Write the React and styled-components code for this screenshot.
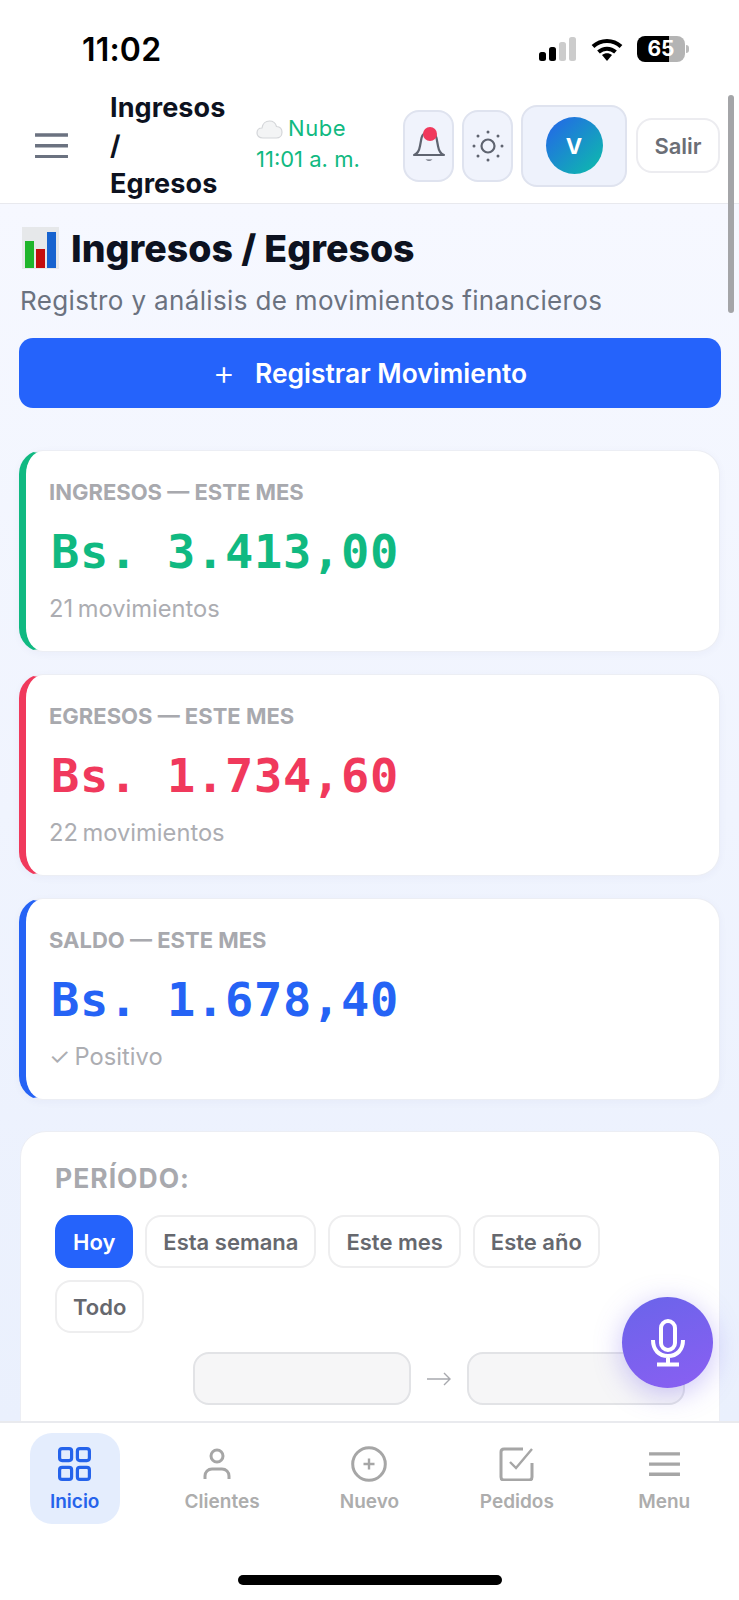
import styled, { createGlobalStyle } from "styled-components";

const GlobalStyle = createGlobalStyle`
  html, body { margin: 0; padding: 0; background: #fff; }
  * { box-sizing: border-box; }
  body { font-family: Inter, "Liberation Sans", sans-serif; }
`;

const stats = [
  { label: "INGRESOS — ESTE MES", amount: "Bs. 3.413,00", note: "21 movimientos", color: "#10b981" },
  { label: "EGRESOS — ESTE MES", amount: "Bs. 1.734,60", note: "22 movimientos", color: "#f0395c" },
  { label: "SALDO — ESTE MES", amount: "Bs. 1.678,40", note: "✓ Positivo", color: "#2563f5" },
];

const periods = ["Hoy", "Esta semana", "Este mes", "Este año", "Todo"];

function SignalIcon() {
  return (
    <svg width="38" height="25" viewBox="0 0 38 25">
      <rect x="0" y="15" width="7" height="9" rx="2.5" fill="#000" />
      <rect x="10" y="10" width="7" height="14" rx="2.5" fill="#000" />
      <rect x="20" y="5" width="7" height="19" rx="2.5" fill="#ccc" />
      <rect x="30" y="0" width="7" height="24" rx="2.5" fill="#ccc" />
    </svg>
  );
}

function WifiIcon() {
  return (
    <svg width="32" height="25" viewBox="0 0 32 25" fill="none" stroke="#000" strokeWidth="4">
      <path d="M2 9.5C10 2 22 2 30 9.5" />
      <path d="M7.5 15C12.5 10.5 19.5 10.5 24.5 15" />
      <path d="M11 18l5 6 5-6c-3-2.4-7-2.4-10 0z" fill="#000" stroke="none" />
    </svg>
  );
}

function MenuIcon({ size = 33, color = "#6b7280", width = 3.4 }) {
  return (
    <svg width={size} height={size * 0.78} viewBox="0 0 32 25" stroke={color} strokeWidth={width}>
      <path d="M0 2h32M0 12.500h32M0 23h32" />
    </svg>
  );
}

function CloudIcon() {
  return (
    <svg width="27" height="20" viewBox="0 0 27 20">
      <path d="M7 19C3 19 1 16.500 1 14c0-3 2-5 5-5 .6-4 3.500-7 7.500-7 3.500 0 6 2 7 5.500 3.300.2 5.500 2.500 5.500 5.700 0 3.300-2.300 5.800-5.500 5.800z" fill="#f3f4f5" stroke="#d4d6d9" strokeWidth="1.200" />
    </svg>
  );
}

function BellIcon() {
  return (
    <svg width="34" height="38" viewBox="0 0 34 38" fill="none">
      <path d="M2 28c3-1 5-3 6-9l1.500-8c.8-4 4-6.500 7.500-6.500s6.700 2.500 7.500 6.500l1.500 8c1 6 3 8 6 9z" stroke="#5f6470" strokeWidth="2.200" strokeLinejoin="round" />
      <path d="M13.500 32.500c2 1.800 5 1.800 7 0z" fill="#5f6470" />
      <circle cx="18" cy="7" r="7" fill="#f0395c" />
    </svg>
  );
}

function SunIcon() {
  const dots = [[17, 3], [17, 31], [3, 17], [31, 17], [7, 7], [27, 7], [7, 27], [27, 27]];
  return (
    <svg width="34" height="34" viewBox="0 0 34 34" fill="#5f6470">
      <circle cx="17" cy="17" r="6.500" fill="none" stroke="#5f6470" strokeWidth="2.200" />
      {dots.map(([x, y]) => <circle key={`${x}-${y}`} cx={x} cy={y} r="1.500" />)}
    </svg>
  );
}

function ChartEmoji() {
  return (
    <svg width="37" height="42" viewBox="0 0 37 42">
      <rect x="0" y="0" width="37" height="42" fill="#e6e8ea" />
      <rect x="3" y="14" width="9" height="27" fill="#1fb52b" />
      <rect x="14" y="22" width="9" height="19" fill="#c40d0d" />
      <rect x="25" y="5" width="9" height="36" fill="#1763cf" />
    </svg>
  );
}

function MicIcon() {
  return (
    <svg width="36" height="48" viewBox="0 0 36 48" fill="none" stroke="#fff" strokeWidth="4">
      <rect x="11" y="2" width="14" height="29" rx="7" />
      <path d="M3 21c0 10 6 16 15 16s15-6 15-16M18 37v8M7 45.500h22" />
    </svg>
  );
}

function ArrowIcon() {
  return (
    <svg width="24" height="14" viewBox="0 0 24 14" fill="none" stroke="#a8a9ae" strokeWidth="1.400">
      <path d="M0 7h23M17 1l6 6-6 6" />
    </svg>
  );
}

function GridIcon() {
  return (
    <svg width="33" height="34" viewBox="0 0 33 34" fill="none" stroke="#2563eb" strokeWidth="3.200">
      <rect x="1.600" y="1.600" width="12" height="12" rx="2.500" />
      <rect x="19.400" y="1.600" width="12" height="12" rx="2.500" />
      <rect x="1.600" y="20.400" width="12" height="12" rx="2.500" />
      <rect x="19.400" y="20.400" width="12" height="12" rx="2.500" />
    </svg>
  );
}

function UserIcon() {
  return (
    <svg width="38" height="32" viewBox="0 0 38 32" fill="none" stroke="#a6a6a6" strokeWidth="3">
      <circle cx="14" cy="8" r="6" />
      <path d="M2 31v-3c0-4 3-7 7-7h10c4 0 7 3 7 7v3" />
    </svg>
  );
}

function PlusCircleIcon() {
  return (
    <svg width="36" height="36" viewBox="0 0 36 36" fill="none" stroke="#a6a6a6" strokeWidth="3">
      <circle cx="18" cy="18" r="16.300" />
      <path d="M18 12.500v11M12.500 18h11" strokeWidth="2.400" />
    </svg>
  );
}

function CheckBoxIcon() {
  return (
    <svg width="35" height="34" viewBox="0 0 35 34" fill="none" stroke="#a6a6a6" strokeWidth="3">
      <path d="M24 2H5C3 2 2 3 2 5v25c0 2 1 3 3 3h25c2 0 3-1 3-3V16" />
      <path d="M11 15l6 6L33 2" strokeWidth="2.400" />
    </svg>
  );
}

const navItems = [
  { label: "Inicio", icon: <GridIcon />, active: true },
  { label: "Clientes", icon: <UserIcon /> },
  { label: "Nuevo", icon: <PlusCircleIcon /> },
  { label: "Pedidos", icon: <CheckBoxIcon /> },
  { label: "Menu", icon: <MenuIcon size={31} color="#a6a6a6" /> },
];

export default function App() {
  return (
    <Phone>
      <GlobalStyle />
      <StatusBar>
        <Clock>11:02</Clock>
        <StatusIcons>
          <SignalIcon />
          <WifiIcon />
          <Battery>65</Battery>
        </StatusIcons>
      </StatusBar>

      <Header>
        <Burger><MenuIcon /></Burger>
        <PageName>Ingresos / Egresos</PageName>
        <SyncInfo>
          <SyncLine $spread><CloudIcon /> Nube</SyncLine>
          <SyncLine>11:01 a. m.</SyncLine>
        </SyncInfo>
        <IconButton><BellIcon /></IconButton>
        <IconButton><SunIcon /></IconButton>
        <AvatarButton><Avatar>V</Avatar></AvatarButton>
        <LogoutButton>Salir</LogoutButton>
      </Header>

      <Main>
        <Title><ChartEmoji /> Ingresos / Egresos</Title>
        <Subtitle>Registro y análisis de movimientos financieros</Subtitle>
        <PrimaryButton><PlusSign>+</PlusSign> Registrar Movimiento</PrimaryButton>

        <Stats>
          {stats.map((item) => (
            <StatCard key={item.label} $color={item.color}>
              <StatLabel>{item.label}</StatLabel>
              <StatAmount $color={item.color}>{item.amount}</StatAmount>
              <StatNote>{item.note}</StatNote>
            </StatCard>
          ))}
        </Stats>

        <PeriodCard>
          <PeriodTitle>PERÍODO:</PeriodTitle>
          <Chips>
            {periods.map((item, index) => (
              <Chip key={item} $active={index === 0}>{item}</Chip>
            ))}
          </Chips>
          <DateRow>
            <DateInput />
            <ArrowIcon />
            <DateInput />
          </DateRow>
        </PeriodCard>
      </Main>

      <ScrollThumb />
      <Fab><MicIcon /></Fab>

      <BottomNav>
        {navItems.map((item) => (
          <NavItem key={item.label} $active={item.active}>
            <NavIcon>{item.icon}</NavIcon>
            {item.label}
          </NavItem>
        ))}
      </BottomNav>
      <HomeArea><HomeBar /></HomeArea>
    </Phone>
  );
}

const Phone = styled.div`
  position: relative;
  display: flex;
  flex-direction: column;
  width: 739px;
  height: 1600px;
  overflow: hidden;
  background: #fff;
`;

const StatusBar = styled.div`
  display: flex;
  align-items: center;
  justify-content: space-between;
  flex: 0 0 88px;
  padding: 10px 54px 0 82px;
`;

const Clock = styled.div`
  font-size: 32px;
  font-weight: 600;
  color: #000;
  letter-spacing: 0.2px;
`;

const StatusIcons = styled.div`
  display: flex;
  align-items: center;
  gap: 14px;
`;

const Battery = styled.div`
  position: relative;
  width: 48px;
  height: 26px;
  border-radius: 8px;
  background: linear-gradient(90deg, #000 0 66%, #b4b4b4 66% 100%);
  color: #fff;
  font-size: 21px;
  font-weight: 700;
  line-height: 26px;
  text-align: center;
  &::after {
    content: "";
    position: absolute;
    top: 9px;
    right: -4px;
    width: 3px;
    height: 8px;
    border-radius: 0 3px 3px 0;
    background: #bbb;
  }
`;

const Header = styled.header`
  display: flex;
  align-items: center;
  flex: 0 0 116px;
  padding: 0 19px 0 35px;
  background: #fff;
  border-bottom: 1px solid #e8e9ee;
`;

const Burger = styled.div`
  display: flex;
  flex: 0 0 75px;
`;

const PageName = styled.div`
  flex: 0 0 146px;
  padding-right: 24px;
  font-size: 27px;
  font-weight: 700;
  line-height: 38px;
  letter-spacing: 0.1px;
  color: #0d1220;
`;

const SyncInfo = styled.div`
  flex: 0 0 147px;
  margin-top: -3px;
  color: #10b981;
  font-size: 22px;
  line-height: 31px;
`;

const SyncLine = styled.div`
  display: flex;
  align-items: center;
  gap: 5px;
  white-space: nowrap;
  letter-spacing: ${(p) => (p.$spread ? "0.6px" : "0")};
`;

const IconButton = styled.div`
  display: flex;
  align-items: center;
  justify-content: center;
  flex: 0 0 51px;
  height: 72px;
  margin-right: 8px;
  border: 2px solid #dfe3ef;
  border-radius: 16px;
  background: #f0f3fc;
`;

const AvatarButton = styled.div`
  display: flex;
  align-items: center;
  justify-content: center;
  flex: 0 0 106px;
  height: 82px;
  margin-right: 9px;
  border: 2px solid #dfe3ef;
  border-radius: 16px;
  background: #eef2fc;
`;

const Avatar = styled.div`
  display: flex;
  align-items: center;
  justify-content: center;
  width: 57px;
  height: 57px;
  border-radius: 50%;
  background: linear-gradient(135deg, #2563eb, #0cbfa9);
  color: #fff;
  font-size: 22px;
  font-weight: 700;
`;

const LogoutButton = styled.div`
  display: flex;
  align-items: center;
  justify-content: center;
  flex: 0 0 84px;
  height: 55px;
  border: 2px solid #ececf0;
  border-radius: 16px;
  background: #fff;
  color: #6b6e76;
  font-size: 22px;
  font-weight: 600;
`;

const Main = styled.main`
  flex: 1;
  min-height: 0;
  overflow: hidden;
  padding: 22px 19px 0;
  background: linear-gradient(180deg, #f6f8ff 0%, #eaf0fd 100%);
`;

const Title = styled.h1`
  display: flex;
  align-items: center;
  gap: 12px;
  height: 44px;
  margin: 0 0 0 3px;
  font-size: 37.500px;
  font-weight: 800;
  color: #0d1220;
  white-space: nowrap;
`;

const Subtitle = styled.p`
  margin: 14px 0 0 1px;
  font-size: 26px;
  line-height: 34px;
  letter-spacing: 0.350px;
  color: #6b7280;
`;

const PrimaryButton = styled.div`
  display: flex;
  align-items: center;
  justify-content: center;
  gap: 20px;
  height: 70px;
  margin-top: 20px;
  width: 702px;
  border-radius: 14px;
  background: #2563fb;
  color: #fff;
  font-size: 26.400px;
  font-weight: 600;
`;

const PlusSign = styled.span`
  font-size: 34px;
  font-weight: 300;
  line-height: 1;
`;

const Stats = styled.div`
  display: flex;
  flex-direction: column;
  gap: 22px;
  margin-top: 42px;
`;

const StatCard = styled.section`
  height: 202px;
  width: 701px;
  padding: 27px 30px 0 23px;
  border: 1px solid #eceef4;
  border-left: 7px solid ${(p) => p.$color};
  border-radius: 24px;
  background: #fff;
  box-shadow: 0 2px 8px rgba(40, 60, 120, 0.04);
`;

const StatLabel = styled.div`
  font-size: 22px;
  font-weight: 700;
  line-height: 28px;
  color: #a8a9ae;
`;

const StatAmount = styled.div`
  margin: 15px 0 0 2px;
  font-family: "DejaVu Sans Mono", "Liberation Mono", monospace;
  font-size: 47px;
  font-weight: 700;
  line-height: 62px;
  letter-spacing: 0.700px;
  color: ${(p) => p.$color};
`;

const StatNote = styled.div`
  margin-top: 12px;
  font-size: 23.700px;
  line-height: 28px;
  word-spacing: -2px;
  color: #acadb2;
`;

const PeriodCard = styled.section`
  width: 700px;
  height: 400px;
  margin: 31px 0 0 1px;
  padding: 32px 34px 0;
  border: 1px solid #eceef4;
  border-radius: 26px;
  background: #fff;
`;

const PeriodTitle = styled.div`
  font-size: 26.500px;
  font-weight: 700;
  line-height: 28px;
  letter-spacing: 1px;
  color: #a8a9ae;
`;

const Chips = styled.div`
  display: flex;
  flex-wrap: wrap;
  gap: 12px;
  margin-top: 23px;
`;

const Chip = styled.div`
  display: flex;
  align-items: center;
  height: 53px;
  padding: 0 16px;
  border: 2px solid ${(p) => (p.$active ? "#2563fb" : "#eeeeef")};
  border-radius: 16px;
  background: ${(p) => (p.$active ? "#2563fb" : "#fff")};
  color: ${(p) => (p.$active ? "#fff" : "#66686e")};
  font-size: 22px;
  font-weight: 600;
`;

const DateRow = styled.div`
  display: flex;
  align-items: center;
  justify-content: flex-end;
  gap: 16px;
  margin-top: 19px;
`;

const DateInput = styled.div`
  width: 218px;
  height: 53px;
  border: 2px solid #e2e3e6;
  border-radius: 16px;
  background: #f6f6f7;
`;

const ScrollThumb = styled.div`
  position: absolute;
  top: 95px;
  left: 728px;
  width: 6px;
  height: 218px;
  border-radius: 3px;
  background: #a4a5a8;
`;

const Fab = styled.div`
  position: absolute;
  top: 1297px;
  left: 622px;
  display: flex;
  align-items: center;
  justify-content: center;
  width: 91px;
  height: 91px;
  border-radius: 50%;
  background: linear-gradient(160deg, #6a64ea, #8a5ff2);
  box-shadow: 0 6px 28px rgba(110, 90, 235, 0.35);
`;

const BottomNav = styled.nav`
  position: relative;
  display: grid;
  grid-template-columns: repeat(5, 147.400px);
  justify-items: center;
  flex: 0 0 154px;
  padding: 10px 0 0 1px;
  background: #fff;
  border-top: 2px solid #e9eaee;
`;

const NavItem = styled.div`
  display: flex;
  flex-direction: column;
  align-items: center;
  width: 90px;
  height: 91px;
  padding-top: 13px;
  border-radius: 22px;
  background: ${(p) => (p.$active ? "#e4edfd" : "transparent")};
  color: ${(p) => (p.$active ? "#2563eb" : "#adadad")};
  font-size: 19px;
  font-weight: 600;
`;

const NavIcon = styled.div`
  display: flex;
  align-items: center;
  justify-content: center;
  height: 36px;
  margin-bottom: 8px;
`;

const HomeArea = styled.div`
  display: flex;
  justify-content: center;
  flex: 0 0 25px;
  background: #fff;
`;

const HomeBar = styled.div`
  width: 264px;
  height: 10px;
  border-radius: 5px;
  background: #000;
`;
